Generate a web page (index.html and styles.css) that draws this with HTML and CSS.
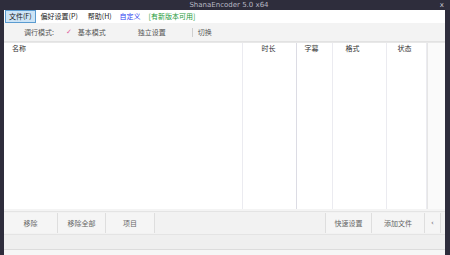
FILE: index.html
```html
<!DOCTYPE html>
<html lang="zh">
<head>
<meta charset="utf-8">
<title>ShanaEncoder</title>
<link rel="stylesheet" href="styles.css">
</head>
<body>
<div class="window">
  <div class="titlebar">
    <span class="title">ShanaEncoder 5.0 x64</span>
    <span class="close">x</span>
  </div>
  <div class="frame">
    <div class="menubar">
      <span class="menu active">文件(F)</span>
      <span class="menu m2">偏好设置(P)</span>
      <span class="menu m3">帮助(H)</span>
      <span class="menu blue">自定义</span>
      <span class="menu green">[有新版本可用]</span>
    </div>
    <div class="toolbar">
      <span class="tlabel">调行模式:</span>
      <span class="check">✓</span>
      <span class="tmode">基本模式</span>
      <span class="tindep">独立设置</span>
      <span class="tsep"></span>
      <span class="tswitch">切换</span>
    </div>
    <div class="list">
      <div class="col c-name"><div class="hd left">名称</div></div>
      <div class="col c-dur"><div class="hd">时长</div></div>
      <div class="col c-sub"><div class="hd">字幕</div></div>
      <div class="col c-fmt"><div class="hd">格式</div></div>
      <div class="col c-st"><div class="hd">状态</div></div>
      <div class="col c-sb"></div>
    </div>
    <div class="buttons">
      <span class="btn b1">移除</span>
      <span class="btn b2">移除全部</span>
      <span class="btn b3">项目</span>
      <span class="spacer"></span>
      <span class="btn b4">快速设置</span>
      <span class="btn b5">添加文件</span>
      <span class="btn b6">‹</span>
    </div>
    <div class="status"></div>
    <div class="bottom"></div>
  </div>
</div>
</body>
</html>
```
FILE: styles.css
```css
html, body {
  margin: 0;
  padding: 0;
  width: 450px;
  height: 255px;
  overflow: hidden;
  background: #2e2d3c;
  font-family: "Noto Sans CJK SC", "Noto Sans", sans-serif;
  font-size: 7px;
  color: #444;
}
.window {
  display: flex;
  flex-direction: column;
  height: 255px;
}
.titlebar {
  height: 10px;
  display: flex;
  align-items: center;
  justify-content: center;
  position: relative;
  color: #b8b8c4;
  font-family: "DejaVu Sans", sans-serif;
  font-size: 7px;
  line-height: 10px;
}
.title {
  margin-left: 8px;
}
.close {
  position: absolute;
  right: 6px;
  top: 0;
  color: #c8c8d0;
  font-size: 7px;
}
.frame {
  flex: 1;
  margin: 0 5px 0 4px;
  display: flex;
  flex-direction: column;
  background: #f4f4f4;
  min-height: 0;
}
.menubar {
  height: 13px;
  display: flex;
  align-items: center;
  background: #ffffff;
  line-height: 11px;
}
.menu {
  color: #222;
  height: 11px;
  border: 1px solid transparent;
  white-space: nowrap;
}
.menu.active {
  margin-left: 1px;
  padding: 0 3px;
  background: #cde4f6;
  border-color: #5a9bd0;
}
.m2 { margin-left: 4px; }
.m3 { margin-left: 8px; }
.menu.blue { color: #2a3cf0; margin-left: 6px; }
.menu.green { color: #1d9a3a; margin-left: 6px; }
.toolbar {
  height: 18px;
  display: flex;
  align-items: center;
  background: #f3f3f3;
  border-bottom: 1px solid #e2e2e2;
  color: #555;
}
.tlabel { margin-left: 20px; }
.check {
  margin-left: 12px;
  color: #e0609a;
  font-size: 7px;
  font-family: "DejaVu Sans", sans-serif;
}
.tmode { margin-left: 6px; }
.tindep { margin-left: 32px; }
.tsep {
  width: 1px;
  height: 9px;
  background: #cfcfcf;
  margin-left: 26px;
}
.tswitch { margin-left: 5px; }
.list {
  flex: 1;
  display: grid;
  grid-template-columns: 239px 54px 36px 54px 40px 1fr;
  background: #ffffff;
  border-top: 1px solid #e8e8e8;
  min-height: 0;
}
.col {
  border-right: 1px solid #ebebf0;
}
.c-dur { border-right-color: #dcdce4; }
.c-sb { border-right: none; background: #fafafa; border-left: 1px solid #e6e6e6; }
.hd {
  height: 10px;
  line-height: 10px;
  text-align: center;
  color: #333;
}
.hd.left {
  text-align: left;
  padding-left: 8px;
}
.c-dur .hd { padding-right: 2px; }
.c-sub .hd { padding-right: 6px; }
.c-fmt .hd { padding-right: 14px; }
.c-st .hd { padding-right: 4px; }
.buttons {
  height: 22px;
  margin-top: 2px;
  display: flex;
  align-items: center;
  background: #f2f2f2;
  border-top: 1px solid #e4e4e4;
  border-bottom: 1px solid #e4e4e4;
}
.btn {
  height: 20px;
  line-height: 20px;
  text-align: center;
  color: #666;
  border-right: 1px solid #dedede;
  box-sizing: border-box;
  background: #f5f5f5;
}
.b1 { width: 54px; }
.b2 { width: 48px; }
.b3 { width: 49px; }
.b4 { width: 47px; border-left: 1px solid #dedede; }
.b5 { width: 53px; }
.b6 { width: 16px; font-family: "DejaVu Sans", sans-serif; }
.spacer { flex: 1; }
.buttons .b6 { margin-right: 4px; }
.status {
  height: 14px;
  background: #efefef;
  border-bottom: 1px solid #dcdcdc;
}
.bottom {
  height: 5px;
  background: #f6f6f6;
}
```
